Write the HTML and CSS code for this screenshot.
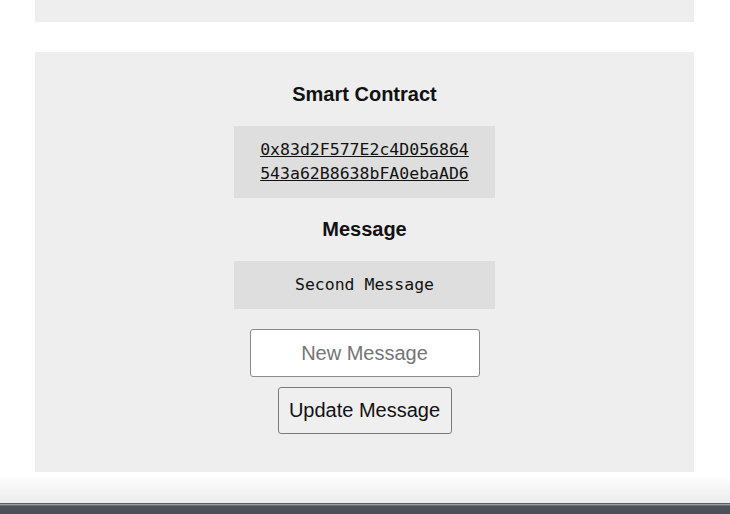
FILE: index.html
```html
<!DOCTYPE html>
<html>
<head>
<meta charset="utf-8">
<link rel="stylesheet" href="styles.css">
</head>
<body>
<div class="page">
  <div class="panel panel-top"></div>
  <div class="panel panel-main">
    <h2 class="title">Smart Contract</h2>
    <div class="code-box"><a class="code-link" href="#">0x83d2F577E2c4D056864543a62B8638bFA0ebaAD6</a></div>
    <h2 class="title">Message</h2>
    <div class="code-box"><span class="code-text">Second Message</span></div>
    <form class="form">
      <input class="input" type="text" placeholder="New Message">
      <button class="button" type="button">Update Message</button>
    </form>
  </div>
</div>
<div class="shade"></div>
<div class="dock"></div>
</body>
</html>
```

FILE: styles.css
```css
html, body {
  margin: 0;
  padding: 0;
  background: #ffffff;
  overflow: hidden;
  height: 514px;
}
body {
  font-family: "Liberation Sans", Arial, sans-serif;
  color: #111;
}
.page {
  display: flex;
  flex-direction: column;
  gap: 30px;
  padding-left: 35px;
  width: 659px;
}
.panel {
  background: #eeeeee;
}
.panel-top {
  height: 22px;
}
.panel-main {
  height: 420px;
  box-sizing: border-box;
  padding-top: 31px;
  display: flex;
  flex-direction: column;
  align-items: center;
  gap: 20px;
}
.title {
  margin: 0;
  font-size: 20px;
  font-weight: bold;
  line-height: 23px;
  color: #111;
}
.code-box {
  width: 261px;
  box-sizing: border-box;
  padding: 12px 24px;
  background: #dedede;
  text-align: center;
  font-family: "DejaVu Sans Mono", "Liberation Mono", monospace;
  font-size: 16.5px;
  line-height: 24px;
  word-break: break-all;
  color: #111;
}
.code-link {
  color: #111;
  text-decoration: underline;
}
.form {
  display: flex;
  flex-direction: column;
  align-items: center;
  gap: 10px;
  margin: 0;
}
.input {
  width: 230px;
  height: 48px;
  box-sizing: border-box;
  border: 1px solid #8a8a8a;
  border-radius: 3px;
  background: #fff;
  font-family: "Liberation Sans", Arial, sans-serif;
  font-size: 20px;
  text-align: center;
  padding: 0 8px;
  margin: 0;
}
.input::placeholder {
  color: #757575;
}
.button {
  width: 174px;
  height: 47px;
  box-sizing: border-box;
  border: 1px solid #7a7a7a;
  border-radius: 3px;
  background: #efefef;
  font-family: "Liberation Sans", Arial, sans-serif;
  font-size: 20px;
  color: #111;
  padding: 0;
  margin: 0;
}
.shade {
  height: 31px;
  background: linear-gradient(#ffffff 10%, #ebebeb 100%);
}
.dock {
  height: 11px;
  box-sizing: border-box;
  background: #4c5059;
  border-top: 1px solid #5a5d64;
  box-shadow: inset 0 1px 0 #9a9da3, inset 0 2px 0 #6b6f77;
}
```
